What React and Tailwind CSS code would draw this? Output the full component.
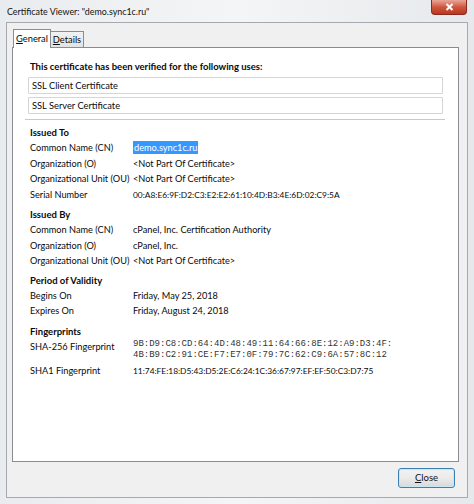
import React from "react";

const font = { fontFamily: 'Lato, "Noto Sans", sans-serif' };

function Row({ label, children, hex }) {
  return (
    <div className="flex items-baseline leading-[15.5px] h-[15.5px]">
      <div className="w-[103px] shrink-0 whitespace-nowrap text-[9.2px]">{label}</div>
      <div className={hex ? "whitespace-nowrap text-[8.4px]" : "whitespace-nowrap text-[9.2px]"}>
        {children}
      </div>
    </div>
  );
}

function Section({ title, children, className = "" }) {
  return (
    <div className={className}>
      <div className="font-bold leading-[15px] h-[15px] text-[9.5px]">{title}</div>
      {children}
    </div>
  );
}

export default function App() {
  return (
    <div
      className="w-[474px] h-[504px] flex flex-col bg-gradient-to-r from-[#e9ecef] via-[#f4f5f6] to-[#e6e9ec] text-[#0a0a0a] text-[9.3px] overflow-hidden"
      style={font}
    >
      {/* title bar */}
      <div className="h-[22px] flex items-start shrink-0">
        <div className="pl-[7px] pt-[5px] text-[8.9px] leading-[14px] text-[#111]">
          Certificate Viewer: "demo.sync1c.ru"
        </div>
        <div className="ml-auto mr-[7px] w-[36px] h-[15px] rounded-b-[4px] border border-t-0 border-[#8a2a1e] bg-gradient-to-b from-[#e8a597] via-[#d0573f] to-[#b8361f] flex items-center justify-center">
          <svg width="9" height="8" viewBox="0 0 9 8">
            <path d="M1.5 1 L7.5 7 M7.5 1 L1.5 7" stroke="#fff" strokeWidth="2" />
          </svg>
        </div>
      </div>

      {/* client area */}
      <div className="mx-[6px] mb-[6px] flex-1 flex flex-col bg-[#f0f0f0] border border-[#a6aab0]">
        {/* tabs */}
        <div className="flex items-end pl-[6px] pt-[5px] h-[24px] shrink-0">
          <div className="relative z-10 h-[19px] w-[38px] justify-center bg-white border border-b-0 border-[#898c95] flex items-center -mb-px">
            <span><span className="underline">G</span>eneral</span>
          </div>
          <div className="h-[16px] w-[33px] justify-center bg-gradient-to-b from-[#f2f2f2] to-[#e3e3e3] border border-l-0 border-b-0 border-[#898c95] flex items-center">
            <span><span className="underline">D</span>etails</span>
          </div>
        </div>

        {/* panel */}
        <div className="ml-[5px] mr-[8px] h-[415px] shrink-0 bg-white border border-[#898c95] pl-[17px] pr-[15px] pt-[12px]">
          <div className="font-bold leading-[14px] text-[9.5px]">
            This certificate has been verified for the following uses:
          </div>
          <div className="mt-[3px] -ml-[2px] flex flex-col gap-[3px]">
            <div className="h-[17px] border border-[#d5d5d5] rounded-[1px] px-[3px] leading-[15px]">
              SSL Client Certificate
            </div>
            <div className="h-[17px] border border-[#d5d5d5] rounded-[1px] px-[3px] leading-[15px]">
              SSL Server Certificate
            </div>
          </div>
          <div className="mt-[5px] -ml-[5px] -mr-[2px] border-t border-[#c9c9c9]" />

          <Section title="Issued To" className="mt-[5px]">
            <Row label="Common Name (CN)">
              <span className="bg-[#3399ff] text-white px-px py-[1px]">demo.sync1c.ru</span>
            </Row>
            <Row label="Organization (O)">&lt;Not Part Of Certificate&gt;</Row>
            <Row label="Organizational Unit (OU)">&lt;Not Part Of Certificate&gt;</Row>
            <Row label="Serial Number" hex>00:A8:E6:9F:D2:C3:E2:E2:61:10:4D:B3:4E:6D:02:C9:5A</Row>
          </Section>

          <Section title="Issued By" className="mt-[5px]">
            <Row label="Common Name (CN)">cPanel, Inc. Certification Authority</Row>
            <Row label="Organization (O)">cPanel, Inc.</Row>
            <Row label="Organizational Unit (OU)">&lt;Not Part Of Certificate&gt;</Row>
          </Section>

          <Section title="Period of Validity" className="mt-[4px]">
            <Row label="Begins On">Friday, May 25, 2018</Row>
            <Row label="Expires On">Friday, August 24, 2018</Row>
          </Section>

          <Section title="Fingerprints" className="mt-[5px]">
            <div className="flex h-[24px]">
              <div className="w-[103px] shrink-0 leading-[15.5px] text-[9.2px]">SHA-256 Fingerprint</div>
              <div
                className="text-[9px] leading-[11px] text-[#333] whitespace-pre"
                style={{ fontFamily: '"Liberation Mono", monospace' }}
              >
                {"9B:D9:C8:CD:64:4D:48:49:11:64:66:8E:12:A9:D3:4F:\n4B:B9:C2:91:CE:F7:E7:0F:79:7C:62:C9:6A:57:8C:12"}
              </div>
            </div>
            <Row label="SHA1 Fingerprint" hex>11:74:FE:18:D5:43:D5:2E:C6:24:1C:36:67:97:EF:EF:50:C3:D7:75</Row>
          </Section>
        </div>

        {/* buttons */}
        <div className="flex justify-end pr-[12px] pt-[6px]">
          <button className="w-[57px] h-[20px] rounded-[3px] border border-[#3c7fb1] bg-gradient-to-b from-[#f2f2f2] via-[#ebebeb] to-[#d9d9d9] shadow-[inset_0_0_0_1px_#c8e6f7] text-[9.5px] text-[#111]">
            <span className="underline">C</span>lose
          </button>
        </div>
      </div>
    </div>
  );
}
